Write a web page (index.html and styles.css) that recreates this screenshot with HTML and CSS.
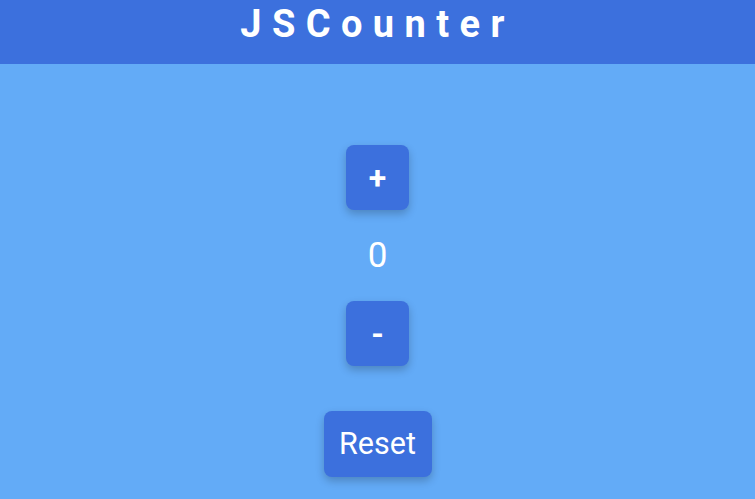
FILE: index.html
```html
<!DOCTYPE html>
<html lang="en">
<head>
<meta charset="utf-8">
<title>JSCounter</title>
<link rel="stylesheet" href="styles.css">
</head>
<body>
<header class="header">
  <h1 class="title">JSCounter</h1>
</header>
<main class="counter">
  <button class="btn btn-step" type="button">+</button>
  <div class="value">0</div>
  <button class="btn btn-step" type="button">-</button>
  <button class="btn btn-reset" type="button">Reset</button>
</main>
</body>
</html>
```
FILE: styles.css
```css
html, body {
  margin: 0;
  padding: 0;
}
body {
  background: #63abf7;
  font-family: Roboto, "Liberation Sans", sans-serif;
  color: #fff;
  min-height: 100vh;
}
.header {
  background: #3c70dd;
  height: 64px;
  display: flex;
  justify-content: center;
  align-items: flex-start;
}
.title {
  margin: 0;
  font-size: 38px;
  line-height: 48px;
  font-weight: 700;
  letter-spacing: 10.4px;
}
.counter {
  display: flex;
  flex-direction: column;
  align-items: center;
  padding-top: 81px;
}
.btn {
  background: #3c70dd;
  color: #fff;
  border: none;
  border-radius: 8px;
  font-family: Roboto, "Liberation Sans", sans-serif;
  box-shadow: 0 4px 8px rgba(0, 0, 0, 0.22);
  display: flex;
  align-items: center;
  justify-content: center;
  padding: 0;
  cursor: pointer;
}
.btn-step {
  width: 63px;
  height: 65px;
  font-size: 32px;
  font-weight: 700;
}
.value {
  font-size: 35px;
  line-height: 40px;
  margin: 26px 0 25px;
}
.btn-reset {
  margin-top: 45px;
  height: 66px;
  width: 108px;
  padding: 0;
  font-size: 30.5px;
  line-height: 66px;
}
```
